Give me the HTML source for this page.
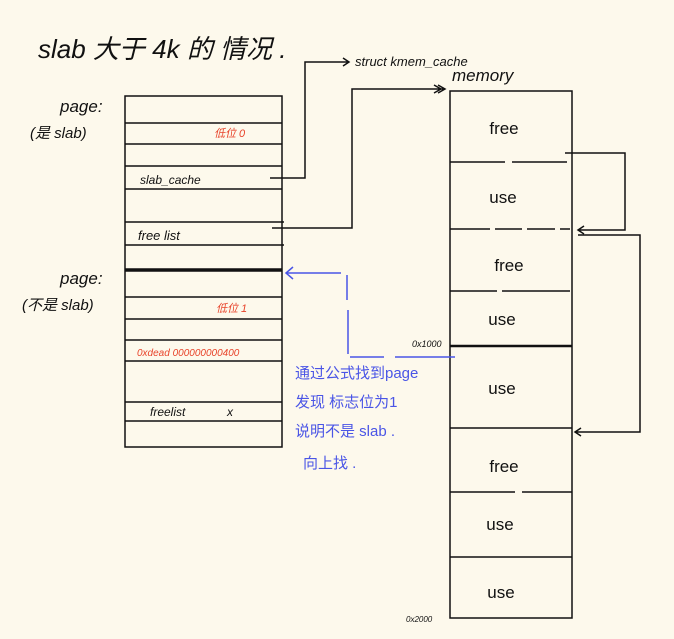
<!DOCTYPE html><html><head><style>body{margin:0;background:#fdf9ec}svg{display:block}text{font-family:"Liberation Sans","Noto Sans CJK SC",sans-serif}</style></head><body>
<svg width="674" height="639" viewBox="0 0 674 639" xmlns="http://www.w3.org/2000/svg">
<rect width="674" height="639" fill="#fdf9ec"/>
<g fill="#111" font-style="italic">
<text x="38" y="58" font-size="26">slab 大于 4k 的 情况 .</text>
<text x="355" y="66" font-size="13">struct kmem_cache</text>
<text x="452" y="81" font-size="17">memory</text>
<text x="60" y="112" font-size="17">page:</text>
<text x="30" y="138" font-size="15">(是 slab)</text>
<text x="60" y="284" font-size="17">page:</text>
<text x="22" y="310" font-size="15">(不是 slab)</text>
<text x="140" y="184" font-size="12">slab_cache</text>
<text x="138" y="240" font-size="13">free list</text>
<text x="150" y="416" font-size="12">freelist</text>
<text x="227" y="416" font-size="12">x</text>
<text x="412" y="347" font-size="9">0x1000</text>
<text x="406" y="622" font-size="8">0x2000</text>
</g>
<g fill="#111" font-size="17" text-anchor="middle">
<text x="504" y="134">free</text>
<text x="503" y="203">use</text>
<text x="509" y="271">free</text>
<text x="502" y="325">use</text>
<text x="502" y="394">use</text>
<text x="504" y="472">free</text>
<text x="500" y="530">use</text>
<text x="501" y="598">use</text>
</g>
<g fill="#e8442b" font-style="italic">
<text x="214" y="137" font-size="11">低位 0</text>
<text x="216" y="312" font-size="11">低位 1</text>
<text x="137" y="356" font-size="10">0xdead 000000000400</text>
</g>
<g fill="#4a55e6" font-size="15">
<text x="295" y="378">通过公式找到page</text>
<text x="295" y="407">发现 标志位为1</text>
<text x="295" y="436">说明不是 slab .</text>
<text x="303" y="468">向上找 .</text>
</g>
<g stroke="#111" stroke-width="1.5" fill="none">
<rect x="125" y="96" width="157" height="351"/>
<path d="M125 123H282M125 144H282M125 166H282M125 189H282M125 222H284M125 245H284M125 297H282M125 319H282M125 340H282M125 361H282M125 402H282M125 421H282"/>
<path d="M125 270H282" stroke-width="3.5"/>
<rect x="450" y="91" width="122" height="527"/>
<path d="M450 162H505M512 162H567M450 229H490M495 229H522M527 229H555M560 229H570M450 291H497M502 291H570M450 428H572M450 492H515M522 492H572M450 557H572"/>
<path d="M450 346H572" stroke-width="2.5"/>
<path d="M270 178H305V62H349M343 58L349 62L343 66"/>
<path d="M272 228H352V89H445M438 85L445 89L438 93M434 85L441 89L434 93"/>
<path d="M565 153H625V230H578M584 226L578 230L584 234"/>
<path d="M578 235H640V432H575M581 428L575 432L581 436"/>
</g>
<g stroke="#4a55e6" stroke-width="1.5" fill="none">
<path d="M341 273H286M293 267L286 273L293 279"/>
<path d="M347 275V300M348 310V354M350 357H384M395 357H455"/>
</g>
</svg></body></html>
